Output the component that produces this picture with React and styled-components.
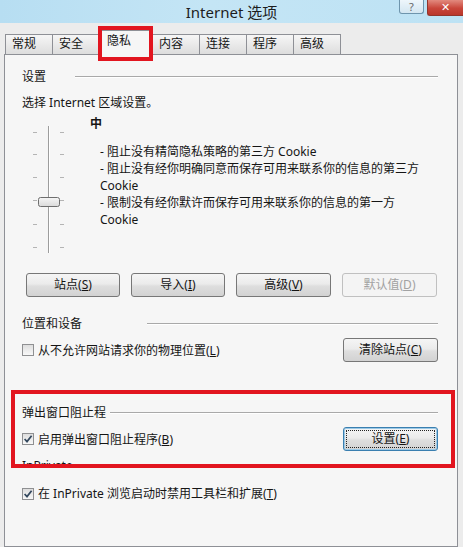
import React from "react";
import styled, { createGlobalStyle, css } from "styled-components";

const GlobalStyle = createGlobalStyle`
  html, body { margin: 0; padding: 0; background: #ededed; }
  body {
    font-family: "Noto Sans", "Noto Sans CJK SC", sans-serif;
    font-size: 12px;
    color: #151515;
  }
  * { box-sizing: border-box; }
`;

const Window = styled.div`
  position: relative;
  width: 463px;
  height: 547px;
  overflow: hidden;
  display: flex;
  flex-direction: column;
  background: #ececec;
`;

const TitleBar = styled.div`
  flex: none;
  height: 23px;
  display: grid;
  grid-template-columns: 1fr auto 1fr;
  align-items: start;
  background: linear-gradient(90deg, #b7def2 0%, #c4e5f5 45%, #bde2f4 100%);
`;

const Title = styled.div`
  grid-column: 2;
  font-size: 15px;
  line-height: 24px;
  color: #1d1d1d;
`;

const Controls = styled.div`
  grid-column: 3;
  justify-self: end;
  display: flex;
  gap: 3px;
  align-items: flex-start;
`;

const HelpButton = styled.div`
  width: 25px;
  height: 14px;
  border: 1px solid #6e95ad;
  border-top: none;
  border-radius: 0 0 3px 3px;
  background: linear-gradient(#eef6fb, #d3e6f1);
  color: #666;
  font-size: 11px;
  line-height: 13px;
  text-align: center;
`;

const CloseButton = styled.div`
  width: 36px;
  height: 16px;
  border: 1px solid #93352b;
  border-top: none;
  border-right: none;
  border-radius: 0 0 0 3px;
  background: linear-gradient(#e28a7e, #c9463a 55%, #b9362b);
  color: #fff;
  font-family: "DejaVu Sans", sans-serif;
  font-weight: bold;
  font-size: 11px;
  line-height: 15px;
  text-align: center;
`;

const TabStrip = styled.div`
  flex: none;
  height: 31px;
  display: flex;
  align-items: flex-end;
  padding-left: 5px;
  position: relative;
  z-index: 1;
`;

const Tab = styled.div`
  position: relative;
  width: 48px;
  height: 20px;
  margin-left: -1px;
  padding-left: 6px;
  border: 1px solid #8e9096;
  border-bottom: none;
  background: linear-gradient(#f6f6f6, #dddddd);
  line-height: 18px;
  white-space: nowrap;
  &:first-child { margin-left: 0; }
  ${(p) =>
    p.$active &&
    css`
      z-index: 2;
      width: 55px;
      height: 25px;
      margin-left: -2px;
      margin-bottom: -1px;
      padding-left: 8px;
      padding-top: 1px;
      line-height: 17px;
      background: #f6f6f6;
    `}
`;

const Panel = styled.div`
  flex: 1;
  margin: 0 5px 0 4px;
  border: 1px solid #8e9096;
  background: #f6f6f6;
  padding: 13px 19px 0 17px;
  display: flex;
  flex-direction: column;
`;

const SectionHeader = styled.div`
  display: flex;
  align-items: center;
  height: 17px;
  line-height: 17px;
  margin-top: ${(p) => p.$mt || 0}px;
`;

const HeaderLabel = styled.span`
  flex: none;
  width: ${(p) => p.$w}px;
  white-space: nowrap;
`;

const HeaderRule = styled.div`
  flex: 1;
  height: 1px;
  background: #a9a9a9;
  box-shadow: 0 1px 0 #ffffff;
`;

const TextLine = styled.div`
  line-height: 17px;
  margin-top: ${(p) => p.$mt || 0}px;
`;

const PrivacyArea = styled.div`
  margin-top: 4px;
  height: 138px;
  display: grid;
  grid-template-columns: 68px 1fr;
`;

const LevelColumn = styled.div`
  line-height: 17px;
`;

const Level = styled.div`
  font-weight: bold;
`;

const Description = styled.div`
  margin-top: 11px;
  padding-left: 10px;
  width: 336px;
`;

const ButtonRow = styled.div`
  margin-top: 20px;
  display: flex;
  justify-content: space-between;
  padding: 0 1px 0 4px;
`;

const Button = styled.div`
  position: relative;
  flex: none;
  width: ${(p) => p.$w || 94}px;
  height: 24px;
  border: 1px solid #777;
  border-radius: 3px;
  background: linear-gradient(#f5f5f5 0%, #ebebeb 45%, #dedede 55%, #d2d2d2 100%);
  line-height: 21px;
  text-align: center;
  white-space: nowrap;
  ${(p) =>
    p.$disabled &&
    css`
      border-color: #c0c0c0;
      background: #f4f4f4;
      color: #a2a2a2;
    `}
  ${(p) =>
    p.$focused &&
    css`
      border-color: #3a7fb0;
      box-shadow: inset 0 0 0 1px #9cc9e6;
      &::after {
        content: "";
        position: absolute;
        inset: 2px;
        border: 1px dotted #222;
        border-radius: 1px;
      }
    `}
`;

const Row = styled.div`
  margin-top: ${(p) => p.$mt || 0}px;
  height: ${(p) => p.$h || 17}px;
  display: flex;
  align-items: center;
  justify-content: space-between;
`;

const CheckRow = styled.label`
  display: flex;
  align-items: center;
  gap: 4px;
  line-height: 17px;
  white-space: nowrap;
`;

const Box = styled.span`
  flex: none;
  width: 12px;
  height: 12px;
  border: 1px solid #8f9092;
  background: linear-gradient(#dedede, #f8f8f8);
  display: inline-flex;
  align-items: center;
  justify-content: center;
`;

const U = styled.span`
  text-decoration: underline;
  text-underline-offset: 1px;
`;

const ClipHeading = styled.div`
  margin-top: 3px;
  height: 13px;
  padding-top: 3px;
  overflow: hidden;
  line-height: 17px;
`;

const RedFrame = styled.div`
  position: absolute;
  left: ${(p) => p.$x}px;
  top: ${(p) => p.$y}px;
  width: ${(p) => p.$w}px;
  height: ${(p) => p.$h}px;
  border: 4px solid #e2151f;
  pointer-events: none;
  z-index: 5;
`;

const Checkbox = ({ checked }) => (
  <Box>
    {checked && (
      <svg width="10" height="10" viewBox="0 0 10 10">
        <path d="M1.6 5 L4 7.6 L8.6 1.8" fill="none" stroke="#33485e" strokeWidth="1.7" />
      </svg>
    )}
  </Box>
);

const Slider = () => {
  const ticks = [17, 39, 62, 85, 109, 132];
  return (
    <svg width="68" height="138" viewBox="0 0 68 138">
      <defs>
        <linearGradient id="thumb" x1="0" y1="0" x2="0" y2="1">
          <stop offset="0" stopColor="#f6f6f6" />
          <stop offset="1" stopColor="#dadada" />
        </linearGradient>
      </defs>
      <line x1="26.5" y1="11" x2="26.5" y2="138" stroke="#9d9d9d" strokeWidth="1" />
      <line x1="27.5" y1="11" x2="27.5" y2="138" stroke="#ffffff" strokeWidth="1" />
      {ticks.map((y) => (
        <g key={y} stroke="#b4b4b4" strokeWidth="1">
          <line x1="11" y1={y + 0.5} x2="15" y2={y + 0.5} />
          <line x1="38" y1={y + 0.5} x2="42" y2={y + 0.5} />
        </g>
      ))}
      <rect x="16.5" y="82.5" width="21" height="9" rx="2" fill="url(#thumb)" stroke="#6e6e6e" />
    </svg>
  );
};

const tabs = ["常规", "安全", "隐私", "内容", "连接", "程序", "高级"];

export default function App() {
  return (
    <>
      <GlobalStyle />
      <Window>
        <TitleBar>
          <Title>Internet 选项</Title>
          <Controls>
            <HelpButton>?</HelpButton>
            <CloseButton>✕</CloseButton>
          </Controls>
        </TitleBar>

        <TabStrip>
          {tabs.map((t) => (
            <Tab key={t} $active={t === "隐私"}>
              {t}
            </Tab>
          ))}
        </TabStrip>

        <Panel>
          <SectionHeader>
            <HeaderLabel $w={53}>设置</HeaderLabel>
            <HeaderRule />
          </SectionHeader>
          <TextLine $mt={9}>选择 Internet 区域设置。</TextLine>

          <PrivacyArea>
            <Slider />
            <LevelColumn>
              <Level>中</Level>
              <Description>
                <div>- 阻止没有精简隐私策略的第三方 Cookie</div>
                <div>- 阻止没有经你明确同意而保存可用来联系你的信息的第三方 Cookie</div>
                <div>- 限制没有经你默许而保存可用来联系你的信息的第一方 Cookie</div>
              </Description>
            </LevelColumn>
          </PrivacyArea>

          <ButtonRow>
            <Button>
              站点(<U>S</U>)
            </Button>
            <Button>
              导入(<U>I</U>)
            </Button>
            <Button $w={95}>
              高级(<U>V</U>)
            </Button>
            <Button $w={95} $disabled>
              默认值(<U>D</U>)
            </Button>
          </ButtonRow>

          <SectionHeader $mt={18}>
            <HeaderLabel $w={125}>位置和设备</HeaderLabel>
            <HeaderRule />
          </SectionHeader>
          <Row $mt={6} $h={24}>
            <CheckRow>
              <Checkbox />
              <span>
                从不允许网站请求你的物理位置(<U>L</U>)
              </span>
            </CheckRow>
            <Button $w={95}>
              清除站点(<U>C</U>)
            </Button>
          </Row>

          <SectionHeader $mt={42}>
            <HeaderLabel $w={88}>弹出窗口阻止程</HeaderLabel>
            <HeaderRule />
          </SectionHeader>
          <Row $mt={6} $h={24}>
            <CheckRow>
              <Checkbox checked />
              <span>
                启用弹出窗口阻止程序(<U>B</U>)
              </span>
            </CheckRow>
            <Button $w={95} $focused>
              设置(<U>E</U>)
            </Button>
          </Row>

          <ClipHeading>InPrivate</ClipHeading>

          <Row $mt={18}>
            <CheckRow>
              <Checkbox checked />
              <span>
                在 InPrivate 浏览启动时禁用工具栏和扩展(<U>T</U>)
              </span>
            </CheckRow>
          </Row>
        </Panel>

        <RedFrame $x={98} $y={26} $w={55} $h={35} />
        <RedFrame $x={11} $y={390} $w={444} $h={78} />
      </Window>
    </>
  );
}
